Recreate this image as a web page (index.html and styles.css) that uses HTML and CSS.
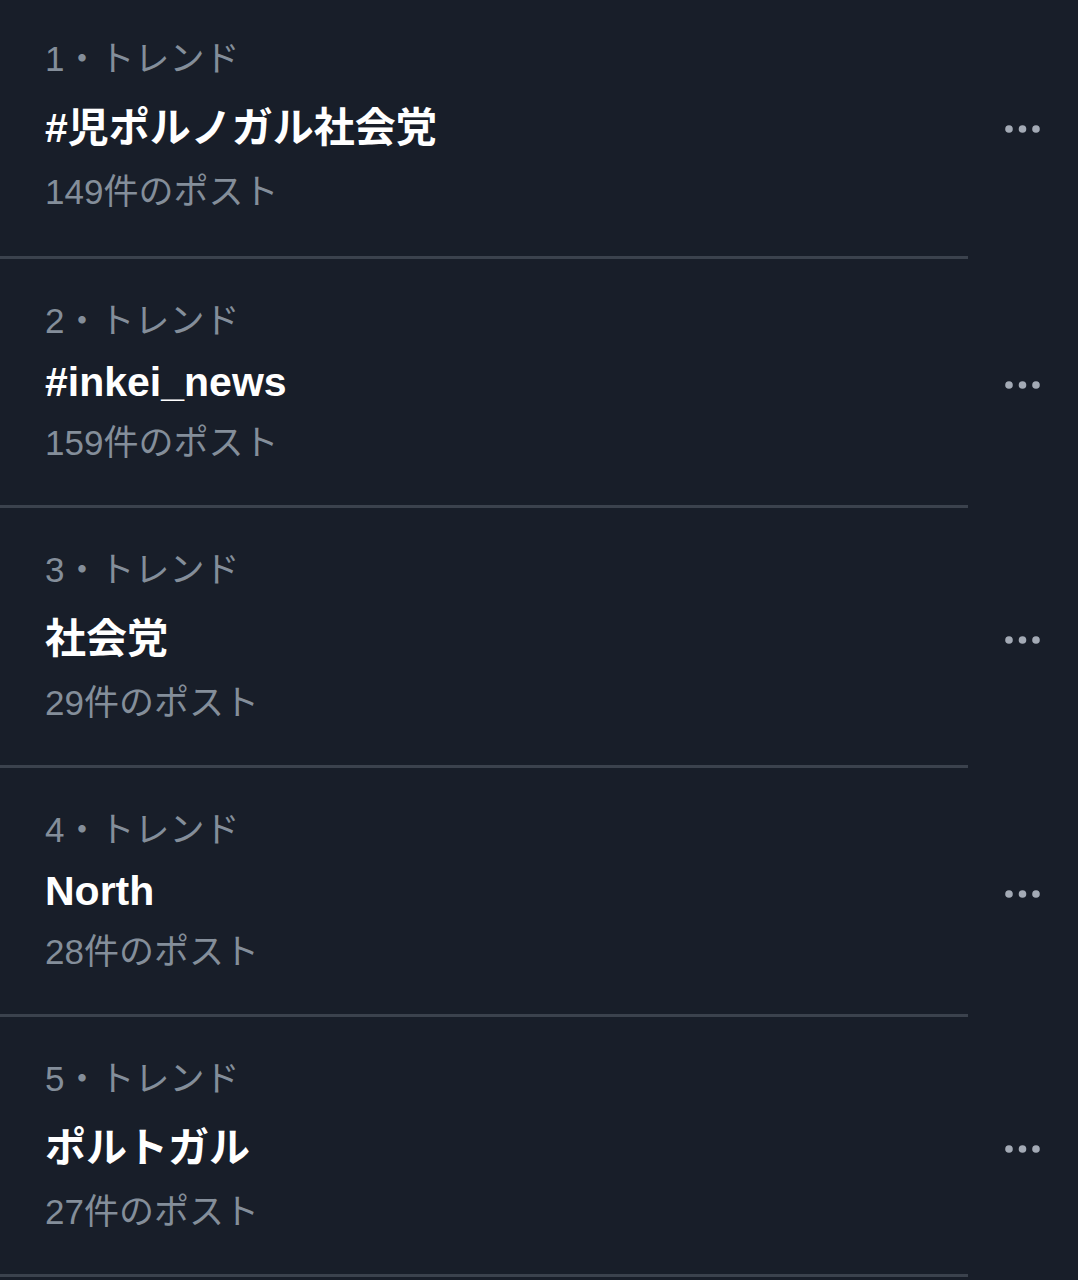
FILE: index.html
```html
<!DOCTYPE html>
<html lang="ja">
<head>
  <meta charset="UTF-8">
  <meta name="viewport" content="width=device-width, initial-scale=1.0">
  <title>トレンド</title>
  <link rel="stylesheet" href="styles.css">
</head>
<body>
  <div class="trends">

    <div class="trend trend-first">
      <div class="trend-main">
        <div class="trend-label">1・トレンド</div>
        <div class="trend-title cjk">#児ポルノガル社会党</div>
        <div class="trend-count">149件のポスト</div>
      </div>
      <div class="more">
        <svg width="35" height="8" viewBox="0 0 35 8"><circle cx="4" cy="4" r="3.8"/><circle cx="17.5" cy="4" r="3.8"/><circle cx="31" cy="4" r="3.8"/></svg>
      </div>
    </div>
    <div class="divider"></div>

    <div class="trend">
      <div class="trend-main">
        <div class="trend-label">2・トレンド</div>
        <div class="trend-title">#inkei_news</div>
        <div class="trend-count">159件のポスト</div>
      </div>
      <div class="more">
        <svg width="35" height="8" viewBox="0 0 35 8"><circle cx="4" cy="4" r="3.8"/><circle cx="17.5" cy="4" r="3.8"/><circle cx="31" cy="4" r="3.8"/></svg>
      </div>
    </div>
    <div class="divider"></div>

    <div class="trend">
      <div class="trend-main">
        <div class="trend-label">3・トレンド</div>
        <div class="trend-title cjk">社会党</div>
        <div class="trend-count">29件のポスト</div>
      </div>
      <div class="more">
        <svg width="35" height="8" viewBox="0 0 35 8"><circle cx="4" cy="4" r="3.8"/><circle cx="17.5" cy="4" r="3.8"/><circle cx="31" cy="4" r="3.8"/></svg>
      </div>
    </div>
    <div class="divider"></div>

    <div class="trend">
      <div class="trend-main">
        <div class="trend-label">4・トレンド</div>
        <div class="trend-title">North</div>
        <div class="trend-count">28件のポスト</div>
      </div>
      <div class="more">
        <svg width="35" height="8" viewBox="0 0 35 8"><circle cx="4" cy="4" r="3.8"/><circle cx="17.5" cy="4" r="3.8"/><circle cx="31" cy="4" r="3.8"/></svg>
      </div>
    </div>
    <div class="divider"></div>

    <div class="trend">
      <div class="trend-main">
        <div class="trend-label">5・トレンド</div>
        <div class="trend-title cjk">ポルトガル</div>
        <div class="trend-count">27件のポスト</div>
      </div>
      <div class="more">
        <svg width="35" height="8" viewBox="0 0 35 8"><circle cx="4" cy="4" r="3.8"/><circle cx="17.5" cy="4" r="3.8"/><circle cx="31" cy="4" r="3.8"/></svg>
      </div>
    </div>
    <div class="divider"></div>

  </div>
</body>
</html>
```

FILE: styles.css
```css
html, body {
  margin: 0;
  padding: 0;
  background-color: #181e29;
}

body {
  font-family: "Liberation Sans", "Noto Sans CJK JP", sans-serif;
  color: #f7f9f9;
  overflow: hidden;
}

.trends {
  width: 100%;
}

.trend {
  display: flex;
  align-items: center;
  padding: 38px 38px 38px 45px;
}

.trend-first {
  padding-top: 35px;
  padding-bottom: 40px;
}

.trend-main {
  flex: 1;
}

.trend-label,
.trend-count {
  font-size: 35px;
  line-height: 48px;
  color: #848e9a;
}

.trend-title {
  font-size: 41px;
  line-height: 74px;
  font-weight: bold;
  color: #ffffff;
}

.trend-title.cjk {
  line-height: 80px;
  margin-top: 5px;
}

.more {
  display: flex;
  align-items: center;
  padding-top: 6px;
}

.more svg {
  display: block;
  fill: #a3aab5;
}

.divider {
  width: 968px;
  height: 3px;
  background-color: #3b424d;
}
```
